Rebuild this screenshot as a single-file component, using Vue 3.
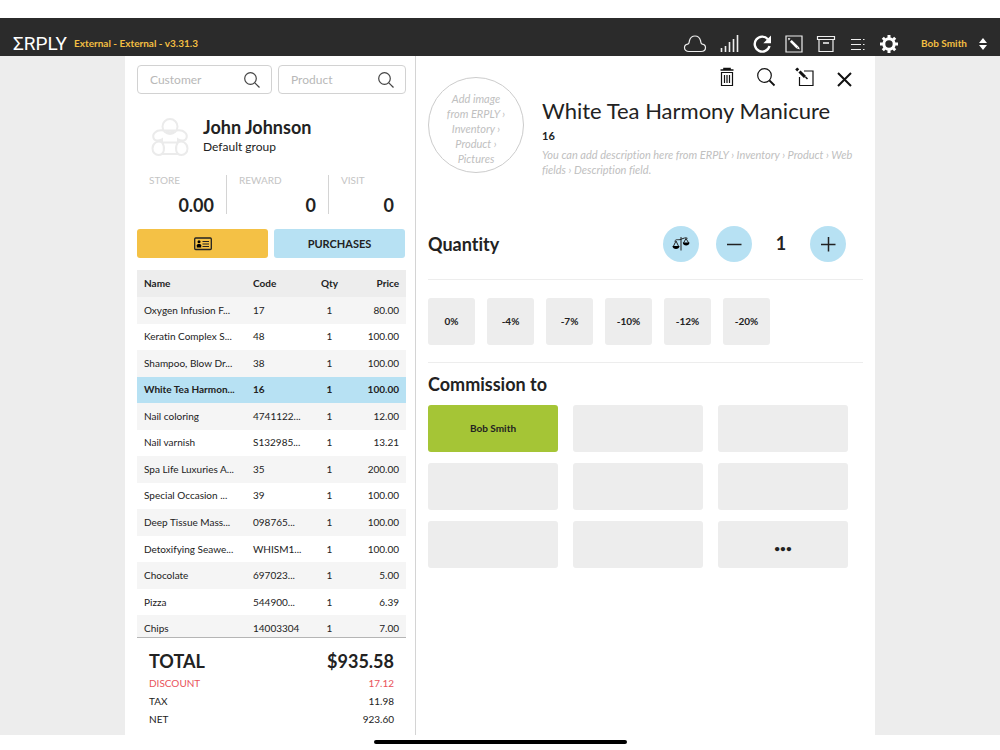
<script setup>
import { ref } from 'vue'

const items = [
  ['Oxygen Infusion F...', '17', '80.00'],
  ['Keratin Complex S...', '48', '100.00'],
  ['Shampoo, Blow Dr...', '38', '100.00'],
  ['White Tea Harmon...', '16', '100.00'],
  ['Nail coloring', '4741122...', '12.00'],
  ['Nail varnish', 'S132985...', '13.21'],
  ['Spa Life Luxuries A...', '35', '200.00'],
  ['Special Occasion ...', '39', '100.00'],
  ['Deep Tissue Mass...', '098765...', '100.00'],
  ['Detoxifying Seawe...', 'WHISM1...', '100.00'],
  ['Chocolate', '697023...', '5.00'],
  ['Pizza', '544900...', '6.39'],
  ['Chips', '14003304', '7.00'],
]
const selected = ref('16')
const discounts = ['0%', '-4%', '-7%', '-10%', '-12%', '-20%']
const staff = ['Bob Smith', '', '', '', '', '', '', '', '•••']
const quantity = ref(1)
</script>

<template>
  <div class="app">
    <header class="topbar">
      <span class="logo">ΣRPLY</span>
      <span class="version">External - External - v3.31.3</span>
      <nav class="tools">
        <button aria-label="Cloud status">
          <svg width="24" height="20" viewBox="0 0 24 20"><path class="thin" d="M6 17.500C3 17.500 1.500 15.800 1.500 13.800c0-2 1.500-3.300 3.300-3.600C6.500 9.500 6 8.300 6.500 6.500 7.200 4 9.200 2 12 2s4.800 2 5.500 4.500c.5 1.800 0 3 1.700 3.700 1.800.3 3.300 1.600 3.300 3.600s-1.500 3.700-4.500 3.700z" /></svg>
        </button>
        <button aria-label="Signal">
          <svg width="20" height="20" viewBox="0 0 20 20"><path class="bars" d="M2.500 18v-4M6.500 18v-6M10.500 18V8M14.500 18V5M18.500 18V1" /></svg>
        </button>
        <button aria-label="Refresh">
          <svg width="20" height="20" viewBox="0 0 20 20"><path class="thick" d="M15.900 5.200A7.500 7.500 0 1 0 17.500 12" /><path class="solid" d="M19 1.500v7.700h-7.700z" /></svg>
        </button>
        <button aria-label="Edit">
          <svg width="20" height="20" viewBox="0 0 20 20"><path class="thin" d="M2 2h16v16H2z" /><path class="pen" d="M6.800 6.800l6.700 6.700" /><path class="solid" d="M4 4l2.500.6-1.800 1.800zM14.800 12.500l1 3-3-1z" /></svg>
        </button>
        <button aria-label="Archive">
          <svg width="20" height="20" viewBox="0 0 20 20"><path class="thin" d="M1.500 2.500h17v3h-17zM3 5.500h14V17.500H3z" /><path class="bars" d="M7 9h6" /></svg>
        </button>
        <button aria-label="List">
          <svg width="18" height="18" viewBox="0 0 18 18"><path class="thin" d="M2 4.500h10M2 9.500h10M2 14.500h10M14 4.500h1.500M14 9.500h1.500M14 14.500h1.500" /></svg>
        </button>
        <button aria-label="Settings">
          <svg width="20" height="20" viewBox="0 0 20 20"><circle class="ring" cx="10" cy="10" r="5.200" /><path class="teeth" d="M10 1v3M10 16v3M1 10h3M16 10h3M3.800 3.800l2 2M14.200 14.200l2 2M16.200 3.800l-2 2M5.800 14.200l-2 2" /></svg>
        </button>
      </nav>
      <button class="user">
        Bob Smith
        <svg width="10" height="14" viewBox="0 0 10 14"><path d="M5 1l4 5H1zM5 13L1 8h8z" fill="#fff" /></svg>
      </button>
    </header>

    <main class="workspace">
      <section class="sale">
        <div class="searches">
          <label class="search customer-search">
            <input type="text" placeholder="Customer" aria-label="Customer" />
            <svg width="18" height="18" viewBox="0 0 18 18"><circle cx="7.500" cy="7.500" r="5.800" /><path d="M11.800 11.800L16.500 16.500" /></svg>
          </label>
          <label class="search">
            <input type="text" placeholder="Product" aria-label="Product" />
            <svg width="18" height="18" viewBox="0 0 18 18"><circle cx="7.500" cy="7.500" r="5.800" /><path d="M11.800 11.800L16.500 16.500" /></svg>
          </label>
        </div>

        <div class="customer">
          <svg class="avatar" width="38" height="38" viewBox="0 0 38 38">
            <path d="M12.500 12.500C9 12 6 12.500 4 14.500 1 17 2 22 5.500 22.500c2 .3 4-.3 5.500-1.200v3.500M25.500 12.500c3.500-.5 6.500 0 8.500 2 3 2.500 2 7.500-1.500 8-2 .3-4-.3-5.500-1.200v3.500" />
            <circle cx="19" cy="8.500" r="7.500" /><path d="M15 12.500c2 3 6 3 8 0z" />
            <path d="M11 24.500h16M11 36h16M11 24.500C7 22 1.500 25 1.500 30.500c0 4 3 6.500 6 6.500 6 0 7-8 3.500-12.500zM27 24.500c4-2.500 9.500.5 9.500 6 0 4-3 6.500-6 6.500-6 0-7-8-3.500-12.500z" />
          </svg>
          <div>
            <h2>John Johnson</h2>
            <p>Default group</p>
          </div>
        </div>

        <dl class="stats">
          <div><dt>STORE</dt><dd>0.00</dd></div>
          <div><dt>REWARD</dt><dd>0</dd></div>
          <div><dt>VISIT</dt><dd>0</dd></div>
        </dl>

        <div class="customer-actions">
          <button class="card" aria-label="Customer card">
            <svg width="18" height="14" viewBox="0 0 18 14"><rect x="0.700" y="1" width="16.600" height="11.500" rx="1" fill="none" stroke="#222" stroke-width="1.300" /><circle cx="5" cy="4.700" r="1.500" /><path d="M2.800 10.500V8.300C2.800 6.500 7.200 6.500 7.200 8.300v2.200z" /><path d="M8.500 4.500h6.500M8.500 7h6.500M8.500 9.500h6.500" stroke="#222" stroke-width="1.200" /></svg>
          </button>
          <button class="purchases">PURCHASES</button>
        </div>

        <div class="list">
          <table>
            <thead>
              <tr><th class="c-name">Name</th><th class="c-code">Code</th><th class="c-qty">Qty</th><th class="c-price">Price</th></tr>
            </thead>
            <tbody>
              <tr v-for="row in items" :key="row[1]" :class="{ active: row[1] === selected }" @click="selected = row[1]">
                <td>{{ row[0] }}</td><td>{{ row[1] }}</td><td>1</td><td>{{ row[2] }}</td>
              </tr>
            </tbody>
          </table>
        </div>

        <dl class="totals">
          <div class="grand"><dt>TOTAL</dt><dd>$935.58</dd></div>
          <div class="discount"><dt>DISCOUNT</dt><dd>17.12</dd></div>
          <div><dt>TAX</dt><dd>11.98</dd></div>
          <div><dt>NET</dt><dd>923.60</dd></div>
        </dl>
      </section>

      <section class="product">
        <div class="summary">
          <div class="photo">Add image<br />from ERPLY ›<br />Inventory ›<br />Product ›<br />Pictures</div>
          <div class="info">
            <div class="row-tools">
              <button aria-label="Delete">
                <svg width="20" height="20" viewBox="0 0 20 20"><path d="M7 2.500V1.500h6v1M3.500 3h13" stroke-width="1.600" /><path d="M4.500 5.500v13h11v-13zM7.500 8v8M10 8v8M12.500 8v8" stroke-width="1.200" /></svg>
              </button>
              <button aria-label="Search">
                <svg width="20" height="20" viewBox="0 0 20 20"><circle cx="8.500" cy="8.500" r="6.800" stroke-width="1.200" /><path d="M13.500 13.500l5 5" stroke-width="1.800" /></svg>
              </button>
              <button aria-label="Edit product">
                <svg width="20" height="20" viewBox="0 0 20 20"><path d="M9 4h9v14.500H4.500V10" stroke-width="1.200" /><path d="M4.500 4.500l5.500 5.500" stroke-width="3" /><path d="M1.200 1.500l2 1.800" stroke-width="3" /><path d="M10.500 10l2 2" stroke-width="1.600" /></svg>
              </button>
              <button aria-label="Close">
                <svg width="20" height="20" viewBox="0 0 20 20"><path d="M4 6l13 13M17 6L4 19" stroke-width="2" /></svg>
              </button>
            </div>
            <h1>White Tea Harmony Manicure</h1>
            <strong class="sku">16</strong>
            <p class="desc">You can add description here from ERPLY › Inventory › Product › Web fields › Description field.</p>
          </div>
        </div>

        <div class="quantity">
          <h3>Quantity</h3>
          <button class="round scale" aria-label="Weigh">
            <svg width="18" height="16" viewBox="0 0 18 16"><path d="M9 1v13.500M2.500 5.200C5 2.500 6 4.500 9 3.300s4.500-2 6.500-1M4 5L1.300 10.500M4 5l2.700 5.500M14 2.500L11.500 7M14 2.500L16.700 7" fill="none" stroke="#222" stroke-width="1" /><path d="M.5 10h7c0 4-7 4-7 0zM10.800 6.500h6.700c0 4-6.700 4-6.700 0z" /></svg>
          </button>
          <button class="round" aria-label="Decrease" @click="quantity--">
            <svg width="18" height="18" viewBox="0 0 18 18"><path d="M2 9.500h14.500" stroke="#222" stroke-width="1.500" /></svg>
          </button>
          <output>{{ quantity }}</output>
          <button class="round" aria-label="Increase" @click="quantity++">
            <svg width="18" height="18" viewBox="0 0 18 18"><path d="M2 9.500h14.500M9.500 2v14.500" stroke="#222" stroke-width="1.500" /></svg>
          </button>
        </div>

        <div class="discounts">
          <button v-for="d in discounts" :key="d">{{ d }}</button>
        </div>

        <h3 class="commission-title">Commission to</h3>
        <div class="staff">
          <button v-for="(name, i) in staff" :key="i" :class="{ chosen: i === 0, more: i === 8 }" :aria-label="name || 'Empty slot'">{{ name }}</button>
        </div>
      </section>
    </main>
    <footer class="home"><span></span></footer>
  </div>
</template>

<style>
body {
  background: #fff;
}
</style>

<style scoped>
* {
  box-sizing: border-box;
}
.app {
  min-height: 100vh;
  padding-top: 18px;
  display: flex;
  flex-direction: column;
  font-family: Lato, "Liberation Sans", sans-serif;
  font-size: 11px;
  line-height: 15px;
  font-variant-ligatures: none;
  color: #222;
}
h1, h2, h3, p, dl, dd {
  margin: 0;
}
button {
  font: inherit;
  color: inherit;
  border: 0;
  padding: 0;
  background: none;
  cursor: pointer;
}
svg {
  display: block;
  flex: none;
}

.topbar {
  height: 38px;
  padding: 13px 12px 0 13px;
  background: #2b2b2b;
  display: flex;
  align-items: center;
}
.logo {
  color: #fff;
  font: 400 19px/24px Roboto, sans-serif;
}
.version, .user {
  color: #f3bf42;
  font-size: 10px;
  font-weight: 700;
}
.version {
  margin-left: 7px;
}
.tools {
  margin-left: auto;
  display: flex;
  align-items: center;
  justify-content: space-between;
  width: 216px;
}
.thin, .bars {
  fill: none;
  stroke: #eee;
  stroke-width: 1.2;
}
.bars {
  stroke-width: 1.6;
}
.thick {
  fill: none;
  stroke: #fff;
  stroke-width: 2.4;
}
.pen {
  stroke: #fff;
  stroke-width: 2.6;
}
.solid {
  fill: #fff;
}
.ring {
  fill: none;
  stroke: #fff;
  stroke-width: 3;
}
.teeth {
  stroke: #fff;
  stroke-width: 3;
}
.user {
  margin-left: 22px;
  display: flex;
  align-items: center;
  gap: 11px;
}

.workspace {
  flex: 1;
  padding: 0 12.5%;
  background: #ededed;
  display: flex;
}
.sale {
  flex: 0 0 291px;
  min-width: 0;
  padding: 9px 9px 7px 12px;
  background: #fff;
  border-right: 1px solid #d4d4d4;
}
.searches {
  display: flex;
  gap: 6px;
}
.search {
  flex: 1;
  min-width: 0;
  height: 29px;
  border: 1px solid #d2d2d2;
  border-radius: 4px;
  display: flex;
  align-items: center;
  padding: 0 10px 0 12px;
}
.customer-search {
  flex: 0 0 135px;
}
.search input {
  width: 100%;
  min-width: 0;
  border: 0;
  outline: 0;
  padding: 0;
  background: none;
  font: 12px/18px Lato, sans-serif;
}
.search input::placeholder {
  color: #b8b8b8;
}
.search svg {
  fill: none;
  stroke: #444;
  stroke-width: 1.2;
}
.customer {
  display: flex;
  align-items: center;
  gap: 14px;
  padding: 23px 0 0 14px;
}
.avatar {
  fill: none;
  stroke: #ebebeb;
  stroke-width: 2;
}
.customer h2 {
  font-size: 18px;
  line-height: 20px;
}
.customer p {
  font-size: 12px;
  line-height: 20px;
}
.stats {
  display: grid;
  grid-template-columns: 90px 102px 1fr;
  margin-top: 18px;
}
.stats div {
  height: 39px;
  padding: 0 12px;
  border-right: 1px solid #d4d4d4;
}
.stats div:last-child {
  border: 0;
}
.stats dt {
  font-size: 10px;
  line-height: 10px;
  color: #c4c4c4;
}
.stats dd {
  margin-top: 8px;
  text-align: right;
  font-weight: 700;
  font-size: 18px;
  line-height: 24px;
}
.customer-actions {
  display: flex;
  gap: 6px;
  margin: 15px 1px 12px 0;
}
.customer-actions button {
  flex: 1;
  height: 29px;
  border-radius: 3px;
  display: flex;
  align-items: center;
  justify-content: center;
  font-weight: 700;
}
.customer-actions .card {
  background: #f4c145;
}
.customer-actions .purchases {
  background: #b7e1f3;
}
.list {
  height: 368px;
  overflow: hidden;
  border-bottom: 1px solid #b5b5b5;
}
table {
  width: 100%;
  height: 372px;
  border-collapse: collapse;
  table-layout: fixed;
  font-size: 10px;
}
th, td {
  padding: 0 7px;
  text-align: left;
  white-space: nowrap;
}
thead tr {
  height: 27px;
  background: #ededed;
}
.c-name {
  width: 109px;
}
.c-code {
  width: 61px;
}
.c-qty {
  width: 45px;
}
th:nth-child(3), td:nth-child(3) {
  text-align: center;
}
th:nth-child(4), td:nth-child(4) {
  text-align: right;
}
tbody tr:nth-child(odd) {
  background: #f5f5f5;
}
tbody tr.active {
  background: #b7e1f3;
  font-weight: 700;
}
.totals {
  padding: 10px 12px 0;
  font-size: 10px;
}
.totals div {
  display: flex;
  justify-content: space-between;
  line-height: 18px;
}
.totals .grand {
  font-size: 18px;
  line-height: 26px;
  font-weight: 700;
}
.totals .discount {
  color: #e9535b;
}

.product {
  flex: 1;
  min-width: 0;
  padding: 0 12px;
  background: #fff;
}
.summary {
  display: flex;
  gap: 18px;
  height: 152px;
}
.photo {
  flex: 0 0 96px;
  height: 96px;
  margin-top: 21px;
  padding-top: 13px;
  border: 1px solid #ccc;
  border-radius: 50%;
  text-align: center;
  font-style: italic;
  color: #c0c0c0;
}
.info {
  flex: 1;
}
.row-tools {
  display: flex;
  justify-content: flex-end;
  gap: 19px;
  padding: 11px 9px 0 0;
}
.row-tools svg {
  fill: none;
  stroke: #111;
}
h1 {
  margin-top: 9px;
  font-size: 22px;
  line-height: 30px;
  font-weight: 400;
}
.sku {
  display: block;
  margin-top: 2px;
}
.desc {
  margin-top: 4px;
  font-style: italic;
  color: #c0c0c0;
}
h3 {
  font-size: 18px;
  line-height: 22px;
}
.quantity {
  height: 72px;
  padding-right: 17px;
  border-bottom: 1px solid #ededed;
  display: flex;
  align-items: center;
}
.quantity h3 {
  flex: 1;
}
.round {
  width: 36px;
  height: 36px;
  border-radius: 50%;
  background: #b7e1f3;
  display: flex;
  align-items: center;
  justify-content: center;
}
.scale {
  margin-right: 17px;
}
.quantity output {
  width: 58px;
  text-align: center;
  font-size: 18px;
  font-weight: 700;
}
.discounts {
  display: flex;
  gap: 12px;
  padding: 18px 0 17px;
  border-bottom: 1px solid #ededed;
}
.discounts button {
  width: 47px;
  height: 47px;
  border-radius: 3px;
  background: #ededed;
  font-size: 10px;
  font-weight: 700;
}
.commission-title {
  margin: 10px 0;
}
.staff {
  display: grid;
  grid-template-columns: repeat(3, 1fr);
  gap: 11px 15px;
  padding-right: 15px;
}
.staff button {
  height: 47px;
  border-radius: 3px;
  background: #ededed;
  font-size: 10px;
  font-weight: 700;
}
.staff .more {
  padding-top: 8px;
}
.staff .chosen {
  background: #a5c536;
}
.home {
  height: 15px;
  padding-top: 5px;
}
.home span {
  display: block;
  width: 253px;
  height: 4px;
  margin: 0 auto;
  border-radius: 2px;
  background: #000;
}
</style>
